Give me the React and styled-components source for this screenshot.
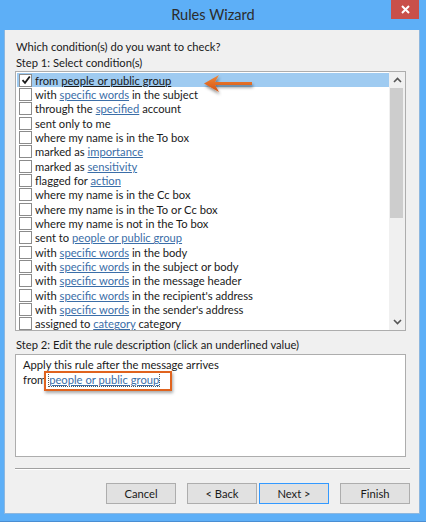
import React from "react";
import styled, { createGlobalStyle } from "styled-components";

const Global = createGlobalStyle`
  html, body { margin: 0; padding: 0; }
  body { font-family: Lato, "Open Sans", sans-serif; }
`;

const Frame = styled.div`
  width: 426px;
  height: 522px;
  box-sizing: border-box;
  background: #5daff7;
  border-bottom: 1px solid #4a8ed2;
  display: flex;
  flex-direction: column;
  padding: 0 6px 8px 4px;
`;

const TitleBar = styled.div`
  height: 30px;
  display: grid;
  grid-template-columns: 1fr auto 1fr;
  margin: 0 -6px 0 -4px;
`;

const Title = styled.div`
  grid-column: 2;
  font-size: 14.6px;
  color: #2c2c2c;
  line-height: 30px;
`;

const Close = styled.div`
  grid-column: 3;
  justify-self: end;
  margin-right: 7px;
  width: 28px;
  height: 19px;
  background: #c9504a;
  display: flex;
  align-items: center;
  justify-content: center;
`;

const Client = styled.div`
  flex: 1;
  background: #f0f0f0;
  border: 1px solid #8db7df;
  border-top: none;
  padding: 9px 9px 9px 10px;
  display: flex;
  flex-direction: column;
  font-size: 11.2px;
  color: #1a1a1a;
`;

const Label = styled.div`
  height: 16px;
  line-height: 16px;
  white-space: nowrap;
  padding-left: 1px;
  margin-top: ${(p) => p.$mt || 0}px;
`;

const ListWrap = styled.div`
  position: relative;
  width: 391px;
  height: 260px;
  box-sizing: border-box;
  border: 1px solid #adadad;
  background: #fff;
  display: flex;
`;

const Rows = styled.div`
  flex: 1;
  padding: 1px 0 0 1px;
`;

const Row = styled.div`
  height: 14.33px;
  display: flex;
  align-items: center;
  white-space: nowrap;
  background: ${(p) => (p.$sel ? "#9fcbf1" : "transparent")};
  padding-left: 2px;
`;

const Box = styled.span`
  width: 11px;
  height: 11px;
  border: 1px solid #8b8b8b;
  background: #fff;
  margin-right: 3px;
  display: flex;
  align-items: center;
  justify-content: center;
  flex: none;
`;

const Link = styled.span`
  color: ${(p) => (p.$dark ? "#1a1a1a" : "#3b6ea8")};
  text-decoration: underline;
  text-underline-offset: 1px;
`;

const Scroll = styled.div`
  width: 16px;
  background: #f0f0f0;
  display: flex;
  flex-direction: column;
`;

const ArrowBtn = styled.div`
  height: 16px;
  display: flex;
  align-items: center;
  justify-content: center;
`;

const Thumb = styled.div`
  height: 130px;
  margin: 0 2px 0 1px;
  background: #cdcdcd;
`;

const Track = styled.div`
  flex: 1;
`;

const Pointer = styled.svg`
  position: absolute;
  left: 184px;
  top: -3px;
`;

const Desc = styled.div`
  width: 391px;
  height: 103px;
  box-sizing: border-box;
  border: 1px solid #adadad;
  background: #fff;
  margin-top: 1px;
  padding: 2px 7px;
  line-height: 15px;
`;

const Focus = styled.span`
  position: relative;
  color: #3b6ea8;
  text-decoration: underline;
  outline: 1px dotted #555;
  &::after {
    content: "";
    position: absolute;
    left: -5px;
    right: -13px;
    top: -2px;
    bottom: -5px;
    border: 2px solid #e0631e;
    box-shadow: 1px 2px 3px rgba(0, 0, 0, 0.35);
  }
`;

const Sep = styled.div`
  height: 1px;
  background: #a0a0a0;
  border-bottom: 1px solid #fff;
  margin-top: 11px;
`;

const Buttons = styled.div`
  display: flex;
  justify-content: flex-end;
  margin-top: 13px;
`;

const Btn = styled.div`
  width: 70px;
  height: 21px;
  box-sizing: border-box;
  border: 1px solid ${(p) => (p.$def ? "#3399ff" : "#adadad")};
  background: #e1e1e1;
  display: flex;
  align-items: center;
  justify-content: center;
  margin-left: ${(p) => p.$ml}px;
  color: #1a1a1a;
`;

const rows = [
  ["from ", "people or public group", ""],
  ["with ", "specific words", " in the subject"],
  ["through the ", "specified", " account"],
  ["sent only to me"],
  ["where my name is in the To box"],
  ["marked as ", "importance", ""],
  ["marked as ", "sensitivity", ""],
  ["flagged for ", "action", ""],
  ["where my name is in the Cc box"],
  ["where my name is in the To or Cc box"],
  ["where my name is not in the To box"],
  ["sent to ", "people or public group", ""],
  ["with ", "specific words", " in the body"],
  ["with ", "specific words", " in the subject or body"],
  ["with ", "specific words", " in the message header"],
  ["with ", "specific words", " in the recipient's address"],
  ["with ", "specific words", " in the sender's address"],
  ["assigned to ", "category", " category"],
];

export default function App() {
  return (
    <>
      <Global />
      <Frame>
        <TitleBar>
          <Title>Rules Wizard</Title>
          <Close>
            <svg width="9" height="9" viewBox="0 0 9 9">
              <path d="M1 1L8 8M8 1L1 8" stroke="#fff" strokeWidth="2" />
            </svg>
          </Close>
        </TitleBar>
        <Client>
          <Label>Which condition(s) do you want to check?</Label>
          <Label>Step 1: Select condition(s)</Label>
          <ListWrap>
            <Rows>
              {rows.map((r, i) => (
                <Row key={i} $sel={i === 0}>
                  <Box>
                    {i === 0 && (
                      <svg width="10" height="10" viewBox="0 0 10 10">
                        <path d="M1.5 5.2L4 7.8L8.8 1.5" fill="none" stroke="#1a1a1a" strokeWidth="1.8" />
                      </svg>
                    )}
                  </Box>
                  <span>
                    {r[0]}
                    {r[1] && <Link $dark={i === 0}>{r[1]}</Link>}
                    {r[2]}
                  </span>
                </Row>
              ))}
            </Rows>
            <Scroll>
              <ArrowBtn>
                <svg width="9" height="6" viewBox="0 0 9 6">
                  <path d="M1 5L4.5 1.5L8 5" fill="none" stroke="#555" strokeWidth="1.6" />
                </svg>
              </ArrowBtn>
              <Thumb />
              <Track />
              <ArrowBtn>
                <svg width="9" height="6" viewBox="0 0 9 6">
                  <path d="M1 1L4.5 4.5L8 1" fill="none" stroke="#555" strokeWidth="1.6" />
                </svg>
              </ArrowBtn>
            </Scroll>
            <Pointer width="60" height="30" viewBox="0 0 60 30">
              <defs>
                <filter id="sh" x="-20%" y="-40%" width="150%" height="200%">
                  <feDropShadow dx="1" dy="2.5" stdDeviation="1.6" floodColor="#000" floodOpacity="0.45" />
                </filter>
                <linearGradient id="og" x1="0" y1="0" x2="0" y2="1">
                  <stop offset="0" stopColor="#f08a3c" />
                  <stop offset="1" stopColor="#d4500f" />
                </linearGradient>
              </defs>
              <g filter="url(#sh)">
                <path
                  d="M4 14.5 L19 6 L15 13 L52 13 L52 16 L15 16 L19 23 Z"
                  fill="url(#og)"
                />
              </g>
            </Pointer>
          </ListWrap>
          <Label $mt={6}>Step 2: Edit the rule description (click an underlined value)</Label>
          <Desc>
            Apply this rule after the message arrives
            <br />
            from <Focus>people or public group</Focus>
          </Desc>
          <Sep />
          <Buttons>
            <Btn $ml={0}>Cancel</Btn>
            <Btn $ml={11}>&lt; Back</Btn>
            <Btn $ml={2} $def>Next &gt;</Btn>
            <Btn $ml={11}>Finish</Btn>
          </Buttons>
        </Client>
      </Frame>
    </>
  );
}
